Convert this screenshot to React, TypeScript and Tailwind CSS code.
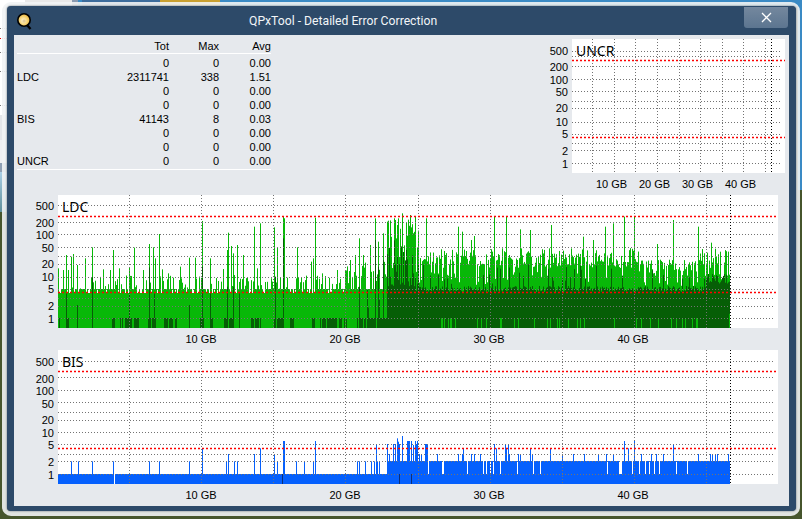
import React from "react";

// seeded random so the chart comes out the same every time
function makeRnd(seed: number) {
  let s = seed;
  return () => {
    s = (s + 0x6d2b79f5) | 0;
    let t = Math.imul(s ^ (s >>> 15), 1 | s);
    t = (t + Math.imul(t ^ (t >>> 7), 61 | t)) ^ t;
    return ((t ^ (t >>> 14)) >>> 0) / 4294967296;
  };
}

const bars = (cols: Array<[number, number]>, bottom: number) =>
  cols.map(([x, y]) => `M${x + 0.5} ${y}V${bottom}`).join("");

// spikes read off the picture, as [x, top y]
const ldcLeft: Array<[number, number]> = [[175,235],[190,240],[198,195],[205,240],[213,200],[220,192],[232,225],[256,205],[277,172],[310,238],[330,240],[340,180],[358,235],[388,232],[403,173],[430,240],[448,162],[460,172],[466,205],[478,132],[487,238],[505,250],[540,230],[568,203],[586,203],[606,93],[630,205],[670,237],[680,180],[685,128],[692,168],[700,190],[712,165],[730,195],[763,110],[770,235],[780,100],[822,112],[830,172],[848,78],[851,85],[890,172],[932,215],[940,205],[945,83],[965,250],[1010,240],[1035,240],[1066,195],[1078,145],[1090,195],[1110,165],[1125,85],[1135,155],[1148,130],[1162,95],[1170,110],[1185,90],[1195,85]];
const ldcRight: Array<[number, number]> = [[5,70],[30,75],[45,80],[78,85],[175,110],[187,125],[213,150],[222,138],[283,78],[318,80],[360,118],[390,120],[452,105],[550,140],[578,150],[615,110],[640,100],[673,80],[702,78],[770,162],[820,90],[895,110],[932,158]];
const darkPatches: Array<[number, number]> = [[175,180],[200,207],[335,345],[360,395],[400,415],[440,470],[490,530],[600,610],[630,640],[670,700],[750,785],[820,850],[870,885],[935,945],[958,1040],[1070,1200]];
const darkSpikes: Array<[number, number]> = [[198,310],[232,345],[277,262],[388,310],[448,232],[462,310],[568,345],[606,230],[630,310],[680,290],[700,290],[716,310],[825,260],[848,145],[1078,290],[1100,300],[1125,150],[1135,230],[1148,210],[1170,260],[1190,200]];

function buildLdc() {
  const rnd = makeRnd(71);
  const light: Array<[number, number]> = [];
  const dark: Array<[number, number]> = [];
  const sliver: Array<[number, number]> = [];
  for (let x = 58; x < 730; x++) {
    let l = 0;
    let d = 328;
    if (x < 387) {
      const r = rnd();
      l = r < 0.45 ? 289 : r < 0.7 ? 293 : 289 - rnd() * 14;
      if (x > 345 && r > 0.4) l = 288 - rnd() * 30;
      const z = x * 3;
      if (darkPatches.some(([a, b]) => z >= a && z < b) && rnd() > 0.15) d = 318;
      if (x > 357 && rnd() < 0.18) d = 318 - rnd() * 25;
    } else if (x < 419) {
      l = 218 + rnd() * 45;
      d = rnd() < 0.5 ? 285 - rnd() * 45 : 292 - rnd() * 15;
      if (rnd() < 0.12) l = 262 + rnd() * 20;
    } else {
      const r = rnd();
      l = r < 0.14 ? 272 + rnd() * 14 : 268 - rnd() * 20;
      if (x > 638 && x < 700 && r > 0.14) l = 272 - rnd() * 14;
      d = rnd() < 0.1 ? 284 - rnd() * 22 : 292 - rnd() * 6;
      if (x > 705) d = 274 + rnd() * 10;
      if (rnd() < 0.13) sliver.push([x, x > 700 ? 304 + rnd() * 14 : 318]);
    }
    light.push([x, l]);
    if (d < 328) dark.push([x, d]);
  }
  ldcLeft.forEach(([z, y]) => {
    const x = Math.round(z / 3);
    if (x < 730) light.push([x, y / 3 + 190]);
  });
  ldcRight.forEach(([z, y]) => light.push([Math.round(400 + z / 3), y / 3 + 190]));
  darkSpikes.forEach(([z, y]) => dark.push([Math.round(z / 3), y / 3 + 190]));
  return { light: bars(light, 328), dark: bars(dark, 328), sliver: bars(sliver, 328) };
}

// BIS, same idea, level 1 is solid and level 2 solid from 23 GB on
const bisLeft: Array<[number, number]> = [[214,349],[235,349],[277,349],[340,349],[448,349],[478,349],[568,349],[607,310],[679,349],[685,327],[703,349],[712,349],[763,327],[780,310],[823,327],[832,349],[848,288],[851,288],[889,349],[913,349],[940,349],[946,288],[1072,349],[1077,349],[1096,349],[1114,349],[1123,349],[1127,297],[1130,349],[1138,349]];
const bisDense: Array<[number, number]> = [[1162,297],[1166,327],[1172,349],[1176,349],[1180,297],[1184,297],[1190,280],[1194,290],[1198,297]];
const bisRight: Array<[number, number]> = [[5,273],[22,288],[25,288],[28,288],[33,288],[38,300],[45,288],[48,297],[52,288],[57,327],[62,327],[75,297],[78,297],[80,297],[112,327],[175,327],[187,327],[190,310],[213,327],[222,327],[240,327],[283,297],[287,310],[315,297],[318,310],[323,297],[328,327],[353,327],[360,327],[390,310],[397,327],[450,310],[487,327],[520,327],[552,327],[595,327],[617,327],[640,327],[673,288],[685,310],[702,288],[722,327],[752,327],[767,327],[790,327],[820,297],[895,327],[930,327],[935,327],[945,327],[950,327],[985,327]];
const bisGaps = [85,125,130,200,212,248,257,270,280,300,350,390,400,420,620,657,660,663,695,718,735,748,762,778,828,862];

function buildBis() {
  const cols: Array<[number, number]> = [];
  for (let x = 58; x < 730; x++) {
    if (x === 114) continue;
    cols.push([x, 474]);
    if (x >= 387 && !bisGaps.some((z) => Math.round(400 + z / 3) === x)) cols.push([x, 461]);
  }
  [...bisLeft, ...bisDense].forEach(([z, y]) => cols.push([Math.round(z / 3), y / 3 + 345]));
  bisRight.forEach(([z, y]) => cols.push([Math.round(400 + z / 3), y / 3 + 345]));
  return bars(cols, 484);
}

const ldc = buildLdc();
const bis = buildBis();

const vLong = [129, 201, 273, 345, 418, 490, 562, 634, 706];
const vShort = [591, 613, 634, 656, 678, 699, 721, 742, 764];

interface PlotProps {
  left: number;
  top: number;
  w: number;
  h: number;
  grid: number[];
  red: number[];
  vs: number[];
  end: number;
  children?: React.ReactNode;
}

const Plot = ({ left, top, w, h, grid, red, vs, end, children }: PlotProps) => (
  <svg width={w} height={h} viewBox={`${left} ${top} ${w} ${h}`} className="block">
    <rect x={left} y={top} width={w} height={h} fill="#ffffff" />
    {children}
    {grid.map((y) => (
      <line key={y} x1={left} x2={left + w - 4} y1={y + 0.5} y2={y + 0.5} stroke="#737373" strokeDasharray="1 2" />
    ))}
    {vs.map((x) => (
      <line key={x} x1={x + 0.5} x2={x + 0.5} y1={top} y2={top + h} stroke="#737373" strokeDasharray="1 2" />
    ))}
    {red.map((y) => (
      <line key={y} x1={left} x2={left + w} y1={y + 0.5} y2={y + 0.5} stroke="#ff0000" strokeWidth="1.3" strokeDasharray="2 2" />
    ))}
    <line x1={end + 0.5} x2={end + 0.5} y1={top} y2={top + h} stroke="#000000" strokeDasharray="1 2" />
  </svg>
);

const longRows = [
  ["500", "h-[17px]"],
  ["200", "h-[12px]"],
  ["100", "h-[13px]"],
  ["50", "h-[16px]"],
  ["20", "h-[13px]"],
  ["10", "h-[12px]"],
  ["5", "h-[17px]"],
  ["2", "h-[13px]"],
  ["1", "h-[12px]"],
];
const shortRows = [
  ["500", "h-[16px]"],
  ["200", "h-[13px]"],
  ["100", "h-[12px]"],
  ["50", "h-[16px]"],
  ["20", "h-[14px]"],
  ["10", "h-[12px]"],
  ["5", "h-[17px]"],
  ["2", "h-[13px]"],
  ["1", "h-[12px]"],
];

const YLabels = ({ rows, className }: { rows: string[][]; className: string }) => (
  <div className={`flex flex-col items-end pr-[4px] ${className}`}>
    {rows.map(([t, h]) => (
      <div key={t} className={`${h} leading-[12px]`}>{t}</div>
    ))}
  </div>
);

const tableRows = [
  ["", "0", "0", "0.00"],
  ["LDC", "2311741", "338", "1.51"],
  ["", "0", "0", "0.00"],
  ["", "0", "0", "0.00"],
  ["BIS", "41143", "8", "0.03"],
  ["", "0", "0", "0.00"],
  ["", "0", "0", "0.00"],
  ["UNCR", "0", "0", "0.00"],
];

const gbs = ["10 GB", "20 GB", "30 GB", "40 GB"];

const App = () => {
  return (
    <div className="relative w-[802px] h-[519px] overflow-hidden bg-[#46552c] pl-[2px] pt-[2px] text-[11px] text-black [font-family:'Liberation_Sans',sans-serif]">
      {/* whatever is behind the window on the desktop */}
      <div className="absolute left-0 top-0 w-[802px] h-[6px] bg-[#3a8ac4]" />
      <div className="absolute left-[82px] top-0 w-[78px] h-[6px] bg-[#3d6c9c]" />
      <div className="absolute left-[160px] top-0 w-[60px] h-[6px] bg-[#c9a030]" />
      <div className="absolute left-0 top-0 w-[78px] h-[172px] bg-white">
        <div className="absolute left-[25px] top-0 w-[47px] h-[6px] bg-[#e8e8e8]" />
        <div className="absolute left-[72px] top-0 w-[6px] h-[6px] bg-[#8a9ab0]" />
        <div className="absolute left-0 top-[28px] w-[7px] border-t border-dotted border-[#777]" />
        <div className="absolute left-0 top-[38px] w-[7px] border-t border-dotted border-[#e80000]" />
        <div className="absolute left-0 top-[52px] w-[7px] border-t border-dotted border-[#777]" />
        <div className="absolute left-0 top-[71px] w-[7px] border-t border-dotted border-[#777]" />
        <div className="absolute left-0 top-[105px] w-[7px] border-t border-dotted border-[#777]" />
        <div className="absolute left-0 top-[115px] w-[78px] h-[25px] bg-[#e4e6e9]" />
        <div className="absolute left-0 top-[140px] w-[78px] h-[23px] bg-[#eff0f2]" />
        <div className="absolute left-0 top-[163px] w-[78px] h-[9px] bg-[#8fa0b4]" />
      </div>
      <div className="absolute left-0 top-[172px] w-[7px] h-[40px] bg-linear-to-b from-[#a9cfe6] to-[#5f8f9a]" />
      <div className="absolute left-[798px] top-0 w-[4px] h-[190px] bg-[#3a8ac4]" />

      <div className="relative w-[798px] h-[514px] rounded-[9px] border-l-[5px] border-t-[4px] border-r-[4px] border-b-[5px] border-[#f1f3f4]/90">
        <div className="w-[789px] h-[505px] rounded-[4px] bg-[#2d4a69] px-[7px] pb-[5px] flex flex-col shadow-[0_0_2px_#56606c]">
          <div className="h-[29px] flex items-start -mx-[7px]">
            <svg width="18" height="18" viewBox="0 0 18 18" className="ml-[9px] mt-[6px] shrink-0">
              <defs>
                <radialGradient id="disc" cx="0.45" cy="0.55" r="0.6">
                  <stop offset="0" stopColor="#fff6d8" />
                  <stop offset="0.6" stopColor="#f4cf6a" />
                  <stop offset="1" stopColor="#e3a52c" />
                </radialGradient>
              </defs>
              <path d="M11 13l3.5 4" stroke="#000" strokeWidth="2.4" />
              <circle cx="8" cy="8" r="6.2" fill="url(#disc)" stroke="#000" strokeWidth="1.6" />
              <circle cx="8" cy="9" r="1" fill="#fff" stroke="#b98a2a" strokeWidth="0.5" />
            </svg>
            <div className="ml-[215px] mt-[5px] text-[12.2px] leading-[20px] text-[#f2f5f8] [font-family:'Roboto',sans-serif]">
              QPxTool - Detailed Error Correction
            </div>
            <button className="ml-auto mr-[8px] mt-[1px] w-[44px] h-[21px] rounded-b-[3px] bg-linear-to-b from-[#74889e] to-[#5c7590] flex items-center justify-center">
              <svg width="11" height="11" viewBox="0 0 11 11">
                <path d="M1 1l9 9M10 1l-9 9" stroke="#ffffff" strokeWidth="1.3" />
              </svg>
            </button>
          </div>

          <div className="flex-1 bg-[#e6e9ed]">
            <div className="h-[160px] flex items-start">
              <div className="w-[254px] ml-[3px] pt-[4px]">
                <div className="grid grid-cols-[1fr_50px_52px] h-[14px] leading-[14px] text-right">
                  <span>Tot</span>
                  <span>Max</span>
                  <span>Avg</span>
                </div>
                <div className="h-px bg-white mb-[2px]" />
                {tableRows.map((r, i) => (
                  <div key={i} className="grid grid-cols-[40px_1fr_50px_52px] h-[14px] leading-[14px] text-right">
                    <span className="text-left">{r[0]}</span>
                    <span>{r[1]}</span>
                    <span>{r[2]}</span>
                    <span>{r[3]}</span>
                  </div>
                ))}
                <div className="h-px bg-white mt-[1px]" />
              </div>
              <div className="ml-auto mr-[4px] mt-[4px]">
                <div className="flex">
                  <YLabels rows={shortRows} className="w-[43px] pt-[6px]" />
                  <div className="relative">
                    <Plot left={571} top={39} w={213} h={134} grid={[51, 56, 66, 79, 91, 101, 108, 122, 134, 143, 150, 163]} red={[60, 137]} vs={vShort} end={770} />
                    <span className="absolute left-[4px] top-[2px] text-[14px] leading-[20px] [font-family:'Noto_Sans',sans-serif]">UNCR</span>
                  </div>
                </div>
                <div className="ml-[61px] grid grid-cols-[43px_43px_43px_43px] text-center h-[22px] pt-[4px] leading-[14px]">
                  {gbs.map((g) => <span key={g}>{g}</span>)}
                </div>
              </div>
            </div>

            <div className="flex">
              <YLabels rows={longRows} className="w-[44px] pt-[5px]" />
              <div className="relative">
                <Plot left={58} top={195} w={720} h={133} grid={[205, 222, 234, 247, 256, 264, 277, 289, 298, 306, 318]} red={[216, 292]} vs={vLong} end={730}>
                  <path d={ldc.light} stroke="#08b808" fill="none" />
                  <path d={ldc.dark} stroke="#065e06" fill="none" />
                  <path d={ldc.sliver} stroke="#08b808" fill="none" />
                </Plot>
                <span className="absolute left-[4px] top-[2px] text-[14px] leading-[20px] [font-family:'Noto_Sans',sans-serif]">LDC</span>
              </div>
            </div>
            <div className="ml-[115px] grid grid-cols-[144px_144px_144px_144px] text-center h-[22px] pt-[4px] leading-[14px]">
              {gbs.map((g) => <span key={g}>{g}</span>)}
            </div>

            <div className="flex">
              <YLabels rows={longRows} className="w-[44px] pt-[6px]" />
              <div className="relative">
                <Plot left={58} top={350} w={720} h={134} grid={[361, 377, 390, 402, 412, 420, 432, 444, 454, 461, 474]} red={[371, 448]} vs={vLong} end={730}>
                  <path d={bis} stroke="#0560fd" fill="none" />
                  <path d="M282.5 474V484M399.5 474V484M411.5 474V484" stroke="#0b2f7a" fill="none" />
                </Plot>
                <span className="absolute left-[4px] top-[2px] text-[14px] leading-[20px] [font-family:'Noto_Sans',sans-serif]">BIS</span>
              </div>
            </div>
            <div className="ml-[115px] grid grid-cols-[144px_144px_144px_144px] text-center h-[20px] pt-[4px] leading-[14px]">
              {gbs.map((g) => <span key={g}>{g}</span>)}
            </div>
          </div>
        </div>
      </div>
    </div>
  );
};

export default App;
